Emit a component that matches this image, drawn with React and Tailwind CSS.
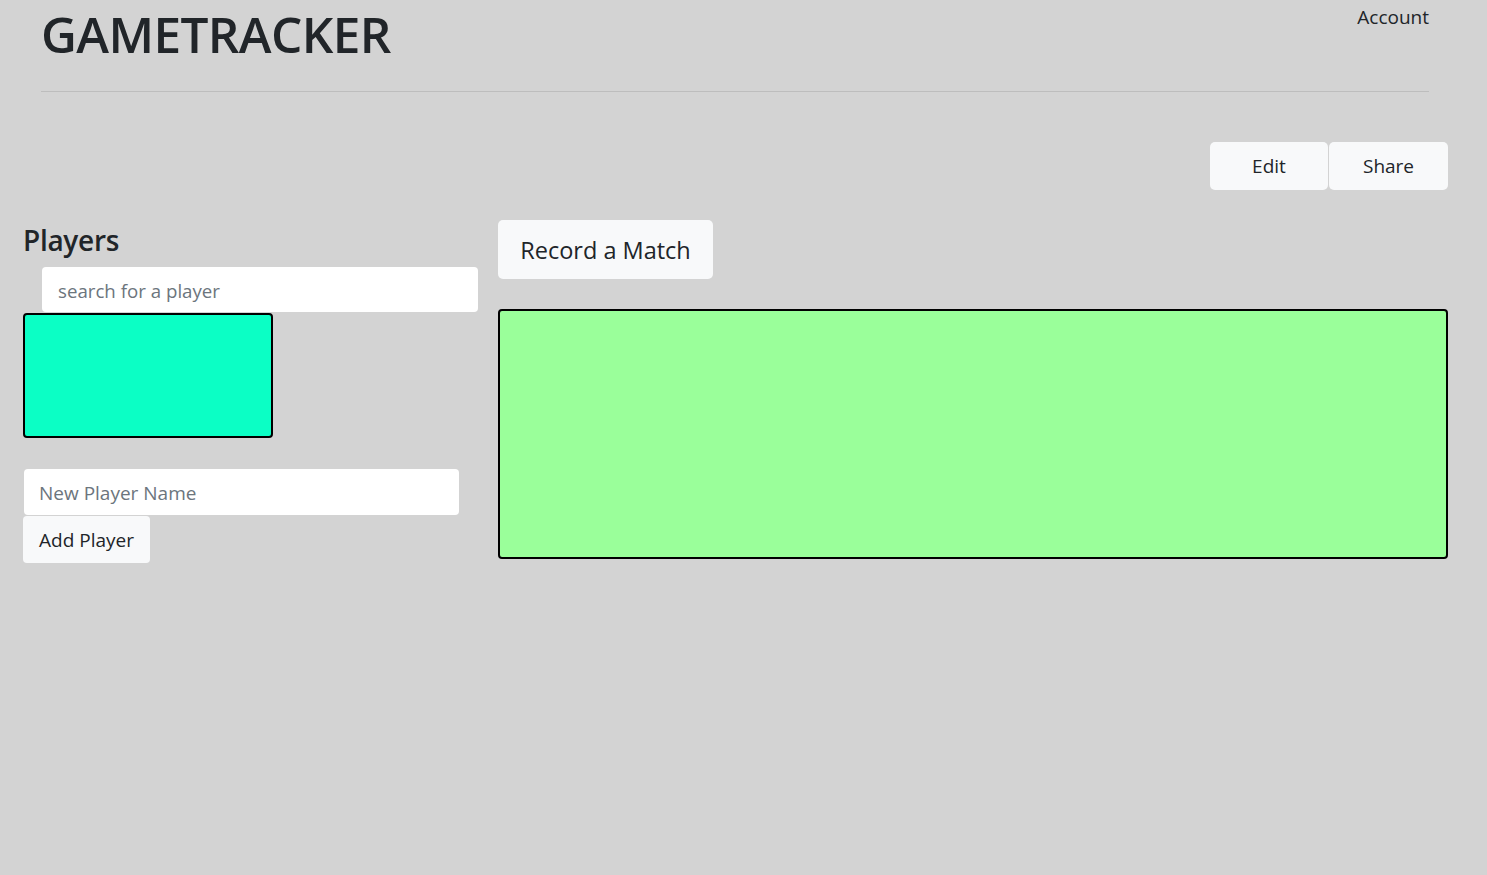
export default function App() {
  return (
    <div className="min-h-[875px] w-full bg-[#d3d3d3] text-[#212529]" style={{ fontFamily: '"Open Sans", "Noto Sans", sans-serif' }}>
      <header className="pl-[41px] pr-[58px]">
        <div className="flex items-start justify-between">
          <h1 className="mt-[4px] text-[49.5px] font-semibold leading-[60px] tracking-[-0.6px]">GAMETRACKER</h1>
          <a className="mt-[4px] text-[19px] leading-[27px]">Account</a>
        </div>
        <hr className="mt-[27px] border-t border-[#bdbdbd]" />
      </header>
      <div className="flex justify-end pr-[39px] pt-[50px]">
        <button className="h-[48px] w-[118px] rounded-[5px] bg-[#f8f9fa] text-[19px] leading-[48px]">Edit</button>
        <button className="ml-[1px] h-[48px] w-[119px] rounded-[5px] bg-[#f8f9fa] text-[19px] leading-[48px]">Share</button>
      </div>
      <main className="flex gap-[20px] pl-[23px] pr-[39px] pt-[30px]">
        <section className="w-[455px]">
          <h3 className="text-[28px] font-semibold leading-[40px] tracking-[-0.3px]">Players</h3>
          <input
            placeholder="search for a player"
            className="ml-[19px] mt-[7px] block h-[45px] w-[436px] rounded-[4px] bg-white px-[16px] pt-[1px] text-[18.7px] outline-none placeholder:text-[#6c757d]"
          />
          <div className="mt-[1px] h-[125px] w-[250px] rounded-[4px] border-2 border-black bg-[#0bffc5]"></div>
          <input
            placeholder="New Player Name"
            className="ml-[1px] mt-[31px] block h-[46px] w-[435px] rounded-[4px] bg-white px-[15px] pt-[2px] text-[19px] outline-none placeholder:text-[#6c757d]"
          />
          <button className="mt-[1px] h-[47px] w-[127px] rounded-[4px] bg-[#f8f9fa] pt-[2px] text-[19px]">Add Player</button>
        </section>
        <section className="flex-1">
          <button className="h-[59px] w-[215px] rounded-[5px] bg-[#f8f9fa] pt-[3px] text-[23.5px]">Record a Match</button>
          <div className="mt-[30px] h-[250px] w-full rounded-[4px] border-2 border-black bg-[#9aff9a]"></div>
        </section>
      </main>
    </div>
  );
}
